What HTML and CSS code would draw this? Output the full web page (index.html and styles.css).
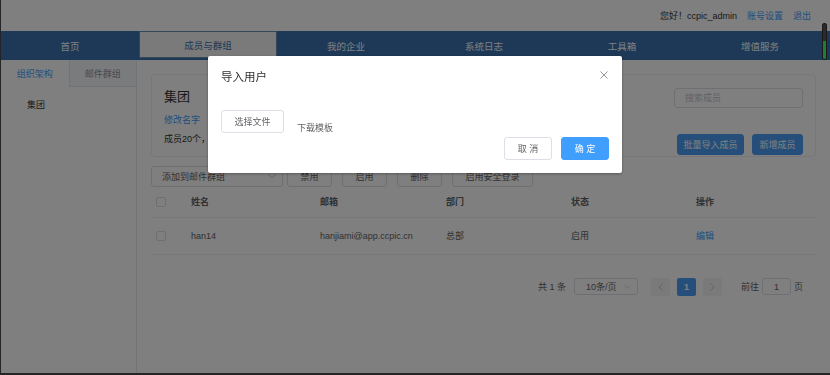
FILE: index.html
```html
<!DOCTYPE html>
<html lang="zh-CN">

<head>
    <meta charset="UTF-8">
    <meta name="viewport" content="width=device-width, initial-scale=1.0">
    <title>成员与群组</title>
    <link rel="stylesheet" href="styles.css">
</head>

<body>

    <div class="page">
        <!-- 顶部用户信息 -->
        <div class="top-bar">
            <span class="hello">您好！ccpic_admin</span>
            <a href="#" class="top-link">账号设置</a>
            <a href="#" class="top-link">退出</a>
        </div>

        <!-- 主导航 -->
        <ul class="nav">
            <li>首页</li>
            <li class="active">成员与群组</li>
            <li>我的企业</li>
            <li>系统日志</li>
            <li>工具箱</li>
            <li>增值服务</li>
        </ul>

        <div class="content">
            <!-- 左侧组织树 -->
            <div class="sidebar">
                <div class="side-tabs">
                    <div class="side-tab active">组织架构</div>
                    <div class="side-tab">邮件群组</div>
                </div>
                <div class="tree-item">集团</div>
            </div>

            <!-- 成员列表 -->
            <div class="main">
                <div class="group-card">
                    <div class="group-info">
                        <h2>集团</h2>
                        <a href="#" class="link">修改名字</a>
                        <p>成员20个，启用20个</p>
                    </div>
                    <div class="group-actions">
                        <input type="text" class="search" placeholder="搜索成员">
                        <div class="action-buttons">
                            <button class="btn btn-blue btn-import">批量导入成员</button>
                            <button class="btn btn-blue btn-add">新增成员</button>
                        </div>
                    </div>
                </div>

                <div class="toolbar">
                    <div class="select select-group">
                        <span class="select-text">添加到邮件群组</span>
                        <svg class="chevron" width="8" height="5" viewBox="0 0 8 5"><path d="M0.5 0.5 L4 4 L7.5 0.5" fill="none" stroke="#c0c4cc" stroke-width="1"/></svg>
                    </div>
                    <button class="btn btn-tool">禁用</button>
                    <button class="btn btn-tool">启用</button>
                    <button class="btn btn-tool">删除</button>
                    <button class="btn btn-tool btn-wide">启用安全登录</button>
                </div>

                <table class="member-table">
                    <thead>
                        <tr>
                            <th class="col-check"><span class="checkbox"></span></th>
                            <th class="col-name">姓名</th>
                            <th class="col-mail">邮箱</th>
                            <th class="col-dept">部门</th>
                            <th class="col-state">状态</th>
                            <th>操作</th>
                        </tr>
                    </thead>
                    <tbody>
                        <tr>
                            <td class="col-check"><span class="checkbox"></span></td>
                            <td>han14</td>
                            <td>hanjiami@app.ccpic.cn</td>
                            <td>总部</td>
                            <td>启用</td>
                            <td><a href="#" class="link">编辑</a></td>
                        </tr>
                    </tbody>
                </table>

                <!-- 分页 -->
                <div class="pagination">
                    <span class="total">共 1 条</span>
                    <div class="select select-size">
                        <span class="select-text">10条/页</span>
                        <svg class="chevron" width="7" height="4" viewBox="0 0 8 5"><path d="M0.5 0.5 L4 4 L7.5 0.5" fill="none" stroke="#c0c4cc" stroke-width="1"/></svg>
                    </div>
                    <button class="pager-btn">
                        <svg width="5" height="8" viewBox="0 0 5 8"><path d="M4.5 0.5 L1 4 L4.5 7.5" fill="none" stroke="#c0c4cc" stroke-width="1"/></svg>
                    </button>
                    <button class="pager-btn current">1</button>
                    <button class="pager-btn">
                        <svg width="5" height="8" viewBox="0 0 5 8"><path d="M0.5 0.5 L4 4 L0.5 7.5" fill="none" stroke="#c0c4cc" stroke-width="1"/></svg>
                    </button>
                    <span class="goto">前往</span>
                    <input type="text" class="goto-input" value="1">
                    <span class="goto-unit">页</span>
                </div>
            </div>
        </div>
    </div>

    <!-- 导入用户弹窗 -->
    <div class="mask"></div>
    <div class="dialog">
        <div class="dialog-header">
            <span class="dialog-title">导入用户</span>
            <svg class="dialog-close" width="8" height="8" viewBox="0 0 8 8"><path d="M0.5 0.5 L7.5 7.5 M7.5 0.5 L0.5 7.5" stroke="#909399" stroke-width="1"/></svg>
        </div>
        <div class="dialog-body">
            <button class="btn btn-file">选择文件</button>
            <span class="download">下载模板</span>
        </div>
        <div class="dialog-footer">
            <button class="btn btn-dialog">取 消</button>
            <button class="btn btn-dialog btn-primary">确 定</button>
        </div>
    </div>

    <div class="scroll-thumb"></div>

</body>

</html>
```

FILE: styles.css
```css
/* 基础重置 */
* {
    margin: 0;
    padding: 0;
    box-sizing: border-box;
    font-family: "Liberation Sans", "Noto Sans CJK SC", sans-serif;
}

body {
    width: 830px;
    height: 375px;
    overflow: hidden;
    background: #fff;
    color: #606266;
    font-size: 9px;
}

a {
    text-decoration: none;
}

button {
    font-size: 9px;
    cursor: pointer;
}

/* 页面外框 */
.page {
    height: 375px;
    display: flex;
    flex-direction: column;
    border-left: 1px solid #4a4a4a;
    border-bottom: 2px solid #4a4a4a;
}

/* 顶部 */
.top-bar {
    height: 31px;
    display: flex;
    align-items: center;
    justify-content: flex-end;
    padding-right: 19px;
    gap: 10px;
}

.hello {
    color: #333;
}

.top-link {
    color: #409eff;
}

/* 导航 */
.nav {
    display: flex;
    list-style: none;
    height: 29px;
    background: #3a72ae;
}

.nav li {
    width: 138px;
    display: flex;
    align-items: center;
    justify-content: center;
    color: #fff;
    font-size: 9.5px;
}

.nav li.active {
    background: #f4f4f4;
    color: #3a72ae;
    border: 1px solid #6d8fb5;
    margin-bottom: 2px;
}

.content {
    flex: 1;
    display: flex;
}

/* 左侧 */
.sidebar {
    width: 136px;
    border-right: 1px solid #e4e7ed;
}

.side-tabs {
    display: flex;
    height: 27px;
}

.side-tab {
    width: 68px;
    display: flex;
    align-items: center;
    justify-content: center;
    color: #909399;
}

.side-tab.active {
    color: #409eff;
}

.side-tab:not(.active) {
    background: #f5f7fa;
    border-left: 1px solid #e4e7ed;
    border-bottom: 1px solid #e4e7ed;
}

.tree-item {
    margin-top: 12px;
    padding-left: 26px;
    color: #333;
    line-height: 12px;
}

/* 右侧 */
.main {
    flex: 1;
    padding: 14px 14px 0 14px;
}

.group-card {
    display: flex;
    justify-content: space-between;
    border: 1px solid #ebeef5;
    border-radius: 4px;
    padding: 13px 12px 1px 12px;
}

.group-info h2 {
    font-size: 13px;
    font-weight: normal;
    color: #333;
    line-height: 18px;
}

.link {
    color: #409eff;
}

.group-info .link {
    display: block;
    margin-top: 8px;
    line-height: 12px;
}

.group-info p {
    margin-top: 7px;
    line-height: 12px;
    color: #333;
}

.group-actions {
    display: flex;
    flex-direction: column;
    align-items: flex-end;
    justify-content: space-between;
}

.search {
    width: 129px;
    height: 20px;
    border: 1px solid #dcdfe6;
    border-radius: 3px;
    padding-left: 10px;
    font-size: 9px;
    outline: none;
}

.search::placeholder {
    color: #c0c4cc;
}

.action-buttons {
    display: flex;
    gap: 8px;
    margin-top: 26px;
}

/* 按钮 */
.btn {
    border-radius: 3px;
    border: 1px solid #dcdfe6;
    background: #fff;
    color: #606266;
}

.btn-blue {
    background: #4a9ff5;
    border-color: #4a9ff5;
    color: #fff;
    height: 21px;
}

.btn-import {
    width: 67px;
}

.btn-add {
    width: 51px;
}

/* 工具栏 */
.toolbar {
    display: flex;
    margin-top: 9px;
    height: 21px;
}

.select {
    display: flex;
    align-items: center;
    justify-content: space-between;
    border: 1px solid #dcdfe6;
    border-radius: 3px;
    background: #fff;
}

.select-group {
    width: 132px;
    padding: 0 6px 0 10px;
    margin-right: 4px;
}

.select-text {
    color: #606266;
}

.btn-tool {
    width: 45px;
    margin-right: 10px;
}

.btn-wide {
    width: 81px;
}

/* 表格 */
.member-table {
    width: 100%;
    border-collapse: collapse;
    table-layout: fixed;
}

.member-table th,
.member-table td {
    text-align: left;
    padding-left: 10px;
    border-bottom: 1px solid #ebeef5;
    font-size: 9px;
}

.member-table th {
    height: 30px;
    color: #606266;
    font-weight: bold;
}

.member-table td {
    height: 37px;
    color: #606266;
}

.member-table .col-check {
    width: 30px;
    padding-left: 5px;
}

.col-name {
    width: 129px;
}

.col-mail {
    width: 126px;
}

.col-dept,
.col-state {
    width: 125px;
}

.checkbox {
    display: block;
    width: 10px;
    height: 10px;
    border: 1px solid #dcdfe6;
    border-radius: 2px;
    background: #fff;
}

/* 分页 */
.pagination {
    display: flex;
    align-items: center;
    justify-content: flex-end;
    margin-top: 23px;
    padding-right: 13px;
    height: 18px;
}

.total {
    margin-right: 8px;
}

.select-size {
    width: 64px;
    height: 17px;
    padding: 0 6px 0 11px;
    margin-right: 13px;
}

.pager-btn {
    width: 19px;
    height: 18px;
    border: none;
    border-radius: 2px;
    background: #f4f4f5;
    color: #606266;
    margin-right: 7px;
    display: flex;
    align-items: center;
    justify-content: center;
}

.pager-btn.current {
    background: #4a9ff5;
    color: #fff;
    font-weight: bold;
}

.goto {
    margin-left: 12px;
    margin-right: 3px;
}

.goto-input {
    width: 29px;
    height: 17px;
    border: 1px solid #dcdfe6;
    border-radius: 3px;
    text-align: center;
    font-size: 9px;
    color: #606266;
    margin-right: 3px;
}

/* 遮罩与弹窗 */
.mask {
    position: fixed;
    top: 0;
    left: 0;
    right: 0;
    bottom: 0;
    background: rgba(0, 0, 0, 0.5);
}

.dialog {
    position: fixed;
    top: 56px;
    left: 208px;
    width: 414px;
    background: #fff;
    border-radius: 2px;
    box-shadow: 0 1px 3px rgba(0, 0, 0, 0.3);
}

.dialog-header {
    position: relative;
    padding: 13px 13px 0;
}

.dialog-title {
    font-size: 11.5px;
    line-height: 16px;
    color: #303133;
}

.dialog-close {
    position: absolute;
    top: 15px;
    right: 14px;
}

.dialog-body {
    display: flex;
    align-items: flex-end;
    padding: 25px 13px 0;
}

.btn-file {
    width: 63px;
    height: 23px;
}

.download {
    margin-left: 13px;
    line-height: 11px;
    margin-bottom: -1px;
    color: #606266;
}

.dialog-footer {
    display: flex;
    justify-content: flex-end;
    gap: 9px;
    padding: 4px 13px 13px;
}

.btn-dialog {
    width: 48px;
    height: 23px;
}

.btn-primary {
    background: #409eff;
    border-color: #409eff;
    color: #fff;
}

/* 右上角滚动条 */
.scroll-thumb {
    position: fixed;
    top: 23px;
    left: 822px;
    width: 5px;
    height: 37px;
    border: 1px solid #1a1a1a;
    border-radius: 2px;
    background: linear-gradient(#2b2b2b 0 50%, #1f7d3b 50%);
}
```
